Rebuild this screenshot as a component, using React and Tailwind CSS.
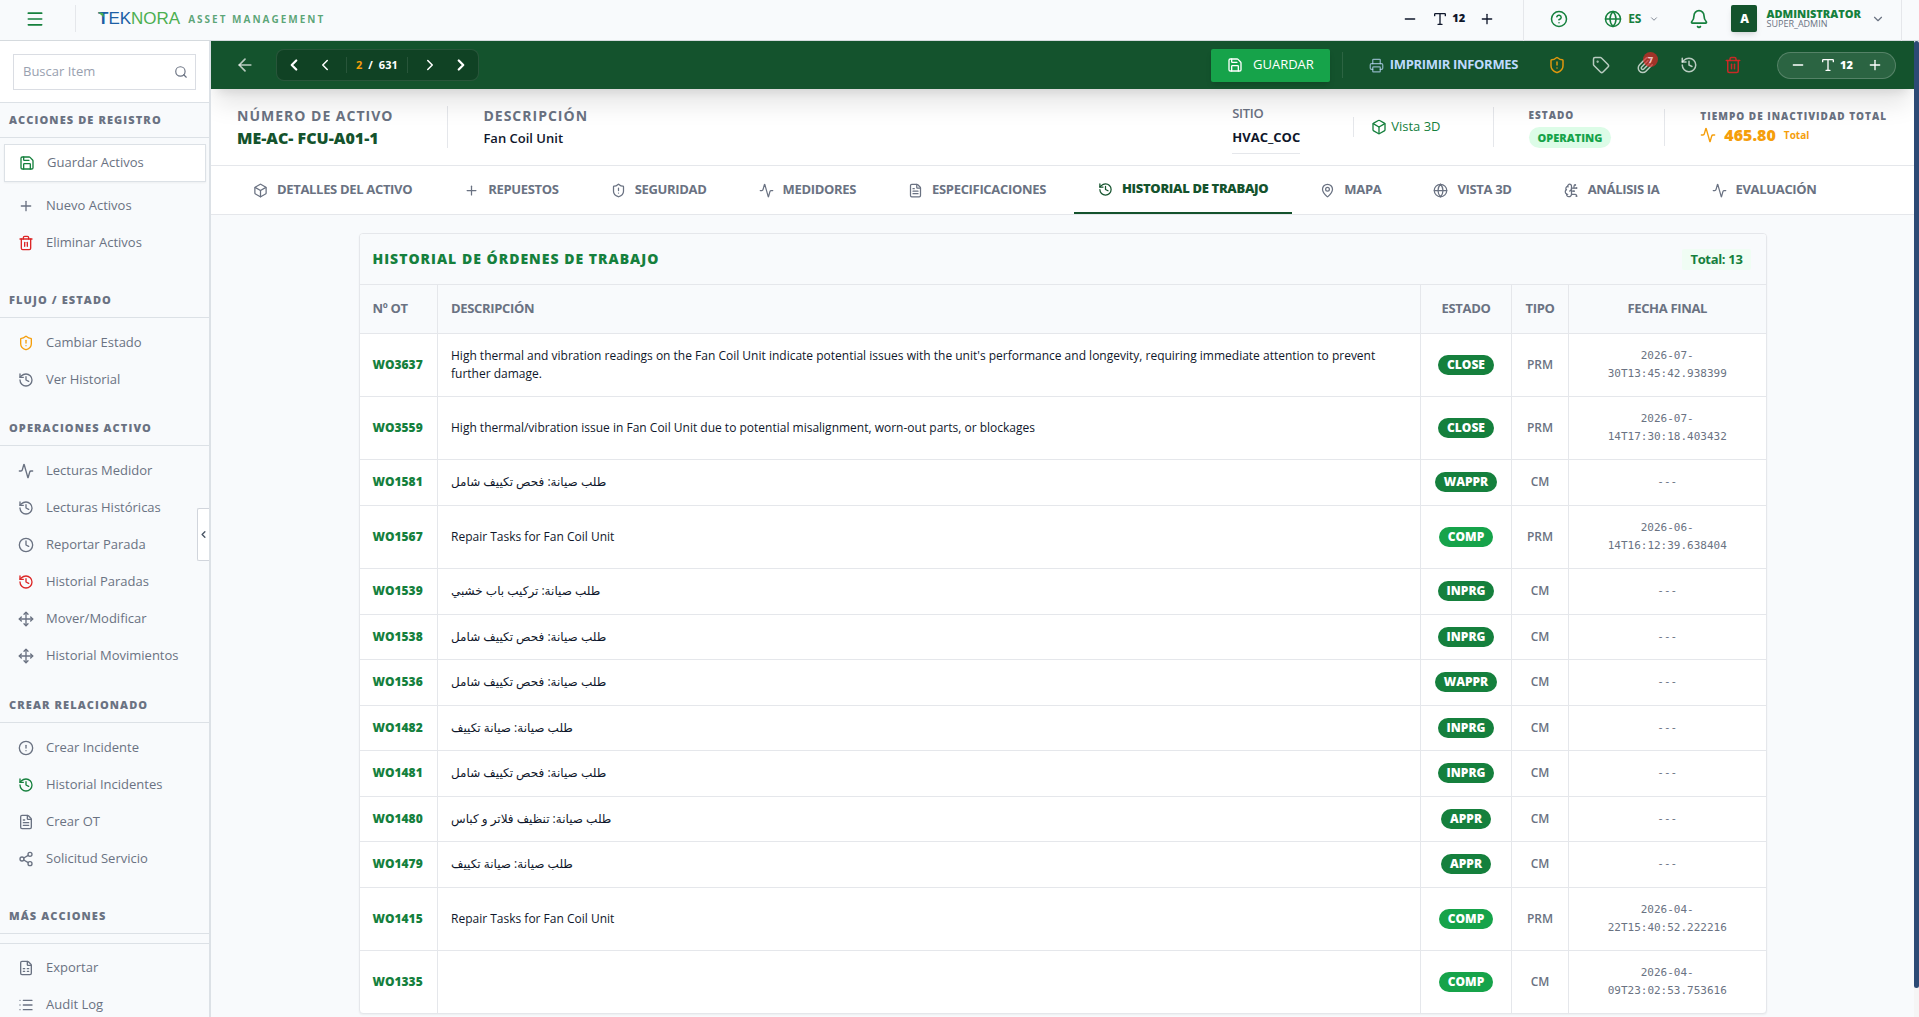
import { useState } from 'react';
import {
    Activity, ArrowLeft, Bell, Box, BrainCircuit, ChevronDown, ChevronLeft, ChevronRight,
    CircleAlert, CircleQuestionMark, Clock, FileSpreadsheet, FileText, Globe, History, List,
    MapPin, Menu, Minus, Move, Paperclip, Plus, Printer, Save, Search, Share2, ShieldAlert,
    Tag, Trash2, Type,
} from 'lucide-react';

const sections = [
    {
        title: 'ACCIONES DE REGISTRO',
        pad: 'pt-[6px] pb-[22px]',
        items: [
            { label: 'Guardar Activos', icon: Save, color: 'text-[#15803d]', active: true },
            { label: 'Nuevo Activos', icon: Plus },
            { label: 'Eliminar Activos', icon: Trash2, color: 'text-[#dc2626]' },
        ],
    },
    {
        title: 'FLUJO / ESTADO',
        pad: 'pt-[6px] pb-[13px]',
        items: [
            { label: 'Cambiar Estado', icon: ShieldAlert, color: 'text-[#f59e0b]' },
            { label: 'Ver Historial', icon: History },
        ],
    },
    {
        title: 'OPERACIONES ACTIVO',
        pad: 'pt-[6px] pb-[14px]',
        items: [
            { label: 'Lecturas Medidor', icon: Activity },
            { label: 'Lecturas Históricas', icon: History },
            { label: 'Reportar Parada', icon: Clock },
            { label: 'Historial Paradas', icon: History, color: 'text-[#dc2626]' },
            { label: 'Mover/Modificar', icon: Move },
            { label: 'Historial Movimientos', icon: Move },
        ],
    },
    {
        title: 'CREAR RELACIONADO',
        pad: 'pt-[6px] pb-[22px]',
        items: [
            { label: 'Crear Incidente', icon: CircleAlert },
            { label: 'Historial Incidentes', icon: History, color: 'text-[#15803d]' },
            { label: 'Crear OT', icon: FileText },
            { label: 'Solicitud Servicio', icon: Share2 },
        ],
    },
    {
        title: 'MÁS ACCIONES',
        pad: 'pt-[5px] pb-4',
        divided: true,
        items: [
            { label: 'Exportar', icon: FileSpreadsheet },
            { label: 'Audit Log', icon: List },
        ],
    },
];

const tabs = [
    { label: 'DETALLES DEL ACTIVO', icon: Box },
    { label: 'REPUESTOS', icon: Plus },
    { label: 'SEGURIDAD', icon: ShieldAlert },
    { label: 'MEDIDORES', icon: Activity },
    { label: 'ESPECIFICACIONES', icon: FileText },
    { label: 'HISTORIAL DE TRABAJO', icon: History },
    { label: 'MAPA', icon: MapPin },
    { label: 'VISTA 3D', icon: Globe },
    { label: 'ANÁLISIS IA', icon: BrainCircuit },
    { label: 'EVALUACIÓN', icon: Activity },
];

const orders = [
    { id: 'WO3637', text: "High thermal and vibration readings on the Fan Coil Unit indicate potential issues with the unit's performance and longevity, requiring immediate attention to prevent further damage.", status: 'CLOSE', type: 'PRM', date: '2026-07-30T13:45:42.938399' },
    { id: 'WO3559', text: 'High thermal/vibration issue in Fan Coil Unit due to potential misalignment, worn-out parts, or blockages', status: 'CLOSE', type: 'PRM', date: '2026-07-14T17:30:18.403432' },
    { id: 'WO1581', text: 'طلب صيانة: فحص تكييف شامل', status: 'WAPPR', type: 'CM' },
    { id: 'WO1567', text: 'Repair Tasks for Fan Coil Unit', status: 'COMP', type: 'PRM', date: '2026-06-14T16:12:39.638404' },
    { id: 'WO1539', text: 'طلب صيانة: تركيب باب خشبي', status: 'INPRG', type: 'CM' },
    { id: 'WO1538', text: 'طلب صيانة: فحص تكييف شامل', status: 'INPRG', type: 'CM' },
    { id: 'WO1536', text: 'طلب صيانة: فحص تكييف شامل', status: 'WAPPR', type: 'CM' },
    { id: 'WO1482', text: 'طلب صيانة: صيانة تكييف', status: 'INPRG', type: 'CM' },
    { id: 'WO1481', text: 'طلب صيانة: فحص تكييف شامل', status: 'INPRG', type: 'CM' },
    { id: 'WO1480', text: 'طلب صيانة: تنظيف فلاتر و كباس', status: 'APPR', type: 'CM' },
    { id: 'WO1479', text: 'طلب صيانة: صيانة تكييف', status: 'APPR', type: 'CM' },
    { id: 'WO1415', text: 'Repair Tasks for Fan Coil Unit', status: 'COMP', type: 'PRM', date: '2026-04-22T15:40:52.222216' },
    { id: 'WO1335', text: '', status: 'COMP', type: 'CM', date: '2026-04-09T23:02:53.753616' },
];

const Logo = () => (
    <a href="#" className="flex items-center gap-2">
        <span className="relative font-['Liberation_Sans',sans-serif] text-[17px] leading-5 text-[#4caf50]">
            <span className="font-bold text-[#1c5fa5]">T</span>
            <span className="text-[#1c5fa5]">EK</span>NORA
            <svg className="absolute left-0 top-[3px] size-[6px]" viewBox="0 0 6 6" aria-hidden="true">
                <path d="M0 0 L5 1 L6 5 L3 3 Z" fill="#4caf50" />
            </svg>
        </span>
        <span className="text-[10px] leading-5 font-bold tracking-[0.2em] text-[#15803d]/70">ASSET MANAGEMENT</span>
    </a>
);

const FontSizer = () => (
    <>
        <button aria-label="Reducir texto"><Minus size={16} /></button>
        <span className="flex items-center gap-1">
            <Type size={16} />
            <span className="text-[11px] font-extrabold">12</span>
        </span>
        <button aria-label="Aumentar texto"><Plus size={16} /></button>
    </>
);

const TopBar = () => (
    <header className="flex h-[41px] shrink-0 items-center border-b border-[#d5dade] bg-[#f8fafc] pb-[3px]">
        <button aria-label="Menú" className="ml-[25px] text-[#15803d]"><Menu size={20} /></button>
        <div className="ml-[30px] mr-[22px] h-[27px] w-px bg-gray-200" />
        <Logo />
        <div className="ml-auto flex items-center gap-[14px] pr-7 text-slate-900">
            <FontSizer />
        </div>
        <div className="-mb-[3px] flex h-[41px] items-center border-x border-gray-200 pb-[3px] pl-[26px] pr-4 text-[#15803d]">
            <button aria-label="Ayuda"><CircleQuestionMark size={18} /></button>
            <button className="ml-9 flex items-center gap-[6px] text-xs font-bold">
                <Globe size={18} />
                ES
                <ChevronDown size={10} className="ml-[2px] text-gray-500" />
            </button>
            <button aria-label="Notificaciones" className="ml-[30px]"><Bell size={20} /></button>
            <button className="ml-[22px] flex items-center text-left">
                <span className="flex h-[27px] w-[26px] items-center justify-center rounded-xs bg-[#14532d] text-xs font-extrabold text-white shadow-md">A</span>
                <span className="ml-[9px] flex flex-col">
                    <span className="text-[11px] leading-[10px] font-extrabold">ADMINISTRATOR</span>
                    <span className="text-[9px] leading-[9px] font-medium text-gray-500">SUPER_ADMIN</span>
                </span>
                <ChevronDown size={14} className="ml-[10px] text-gray-500" />
            </button>
        </div>
        <div className="w-[17px]" />
    </header>
);

const Sidebar = () => (
    <aside className="relative flex w-[211px] shrink-0 flex-col border-r-2 border-[#dce1e6] bg-[#f8fafc]">
        <div className="shrink-0 border-b border-[#dce1e6] bg-white px-[13px] pt-[13px] pb-3">
            <label className="flex h-[36px] items-center border border-gray-300/80 pl-[9px] pr-[7px]">
                <input type="text" placeholder="Buscar Item" aria-label="Buscar Item" className="min-w-0 flex-1 text-[13px] outline-none placeholder:text-gray-400" />
                <Search size={14} className="text-gray-500" />
            </label>
        </div>
        <nav className="min-h-0 flex-1 overflow-hidden">
            {sections.map((section) => (
                <section key={section.title}>
                    <h2 className="h-[35px] border-b border-[#dce1e6] pl-[9px] text-[11px] leading-[34px] font-extrabold tracking-widest text-gray-500">
                        {section.title}
                    </h2>
                    {section.divided && <hr className="mt-[9px] border-[#dce1e6]" />}
                    <ul className={section.pad}>
                        {section.items.map(({ label, icon: Icon, color = 'text-gray-500', active }) => (
                            <li key={label} className={active ? 'mb-[5px] pl-1 pr-[3px]' : ''}>
                                <a
                                    href="#"
                                    className={`flex items-center gap-3 text-[13px] font-medium text-gray-500 ${active ? 'h-[38px] border border-[#dce1e6] bg-white pl-[14px] shadow-xs' : 'h-[37px] pl-[18px]'}`}
                                >
                                    <Icon size={16} className={color} />
                                    {label}
                                </a>
                            </li>
                        ))}
                    </ul>
                </section>
            ))}
        </nav>
        <button aria-label="Contraer panel" className="absolute right-0 top-[467px] flex h-[53px] w-3 items-center justify-center rounded-l-xs border border-r-0 border-gray-300 bg-white text-gray-600">
            <ChevronLeft size={11} strokeWidth={3} />
        </button>
    </aside>
);

const Toolbar = () => (
    <div className="relative z-10 flex h-12 shrink-0 items-center bg-[#14532d] pl-6 pr-[18px] text-white shadow-xl">
        <button aria-label="Volver" className="text-white/70"><ArrowLeft size={20} /></button>
        <div className="ml-[21px] flex h-8 items-center rounded-lg border border-white/10 bg-black/20 px-2">
            <button aria-label="Primero"><ChevronLeft size={18} strokeWidth={3} /></button>
            <button aria-label="Anterior" className="ml-[13px]"><ChevronLeft size={18} /></button>
            <div className="ml-3 flex h-4 items-center border-x border-white/10 px-[9px] text-[11px] font-bold">
                <span className="text-[#f59e0b]">2</span>
                <span className="px-[6px]">/</span>
                <span>631</span>
            </div>
            <button aria-label="Siguiente" className="ml-[13px]"><ChevronRight size={18} /></button>
            <button aria-label="Último" className="ml-[13px]"><ChevronRight size={18} strokeWidth={3} /></button>
        </div>
        <button className="ml-auto flex h-[33px] items-center gap-[10px] rounded-xs bg-[#16a34a] px-4 text-[13px] shadow-md">
            <Save size={16} />
            GUARDAR
        </button>
        <div className="mx-3 h-[26px] w-px bg-white/10" />
        <button className="ml-[14px] flex items-center gap-[6px] text-[13px] font-bold tracking-tight text-[#bfdbfe]">
            <Printer size={15} className="text-[#bfdbfe]/70" />
            IMPRIMIR INFORMES
        </button>
        <div className="ml-[30px] flex items-center gap-[26px] text-white/70">
            <button aria-label="Estado" className="text-[#f59e0b]/90"><ShieldAlert size={18} /></button>
            <button aria-label="Etiqueta"><Tag size={18} /></button>
            <button aria-label="Adjuntos" className="relative">
                <Paperclip size={18} />
                <span className="absolute -right-1 -top-1 flex size-[15px] items-center justify-center rounded-full bg-[#dc2626]/70 text-[9px] font-bold">7</span>
            </button>
            <button aria-label="Historial"><History size={18} /></button>
            <button aria-label="Eliminar" className="text-[#dc2626]/90"><Trash2 size={18} /></button>
        </div>
        <div className="ml-[35px] flex h-[27px] items-center gap-[14px] rounded-full border border-white/20 bg-white/10 px-3">
            <FontSizer />
        </div>
    </div>
);

const InfoBar = () => (
    <div className="flex h-[77px] shrink-0 items-center border-b border-gray-200 bg-white pl-[26px] pr-[27px] shadow-sm">
        <div>
            <div className="text-sm leading-[22px] font-bold tracking-[1px] text-gray-500">NÚMERO DE ACTIVO</div>
            <div className="text-base leading-[22px] font-extrabold text-[#14532d]">ME-AC- FCU-A01-1</div>
        </div>
        <div className="ml-[54px] mr-[35px] h-[42px] w-px bg-gray-200" />
        <div>
            <div className="text-sm leading-[22px] font-bold tracking-[1px] text-gray-500">DESCRIPCIÓN</div>
            <div className="text-[13px] leading-[22px] font-semibold text-slate-900">Fan Coil Unit</div>
        </div>
        <div className="ml-auto">
            <div className="text-[13px] leading-6 font-semibold tracking-tight text-gray-500">SITIO</div>
            <div className="border-b border-gray-200 pb-1 text-[13px] leading-6 font-bold text-slate-900">HVAC_COC</div>
        </div>
        <div className="ml-[53px] mr-[17px] h-5 w-px bg-gray-200" />
        <button className="flex items-center gap-1 text-[13px] text-[#15803d]">
            <Box size={16} />
            Vista 3D
        </button>
        <div className="ml-[52px] mr-[35px] h-10 w-px bg-gray-200" />
        <div className="flex flex-col items-start gap-1">
            <div className="text-[10px] leading-4 font-extrabold tracking-widest text-gray-500">ESTADO</div>
            <span className="rounded-full bg-[#dcfce7] px-[9px] text-[11px] leading-[21px] font-extrabold text-[#16a34a]">OPERATING</span>
        </div>
        <div className="ml-[53px] mr-[35px] h-[37px] w-px bg-gray-200" />
        <div>
            <div className="text-[10px] leading-4 font-extrabold tracking-widest text-gray-500">TIEMPO DE INACTIVIDAD TOTAL</div>
            <div className="flex items-center gap-2 leading-[22px] text-[#f59e0b]">
                <Activity size={16} />
                <span className="text-base leading-[22px] font-extrabold">465.80</span>
                <span className="text-[10px] font-bold">Total</span>
            </div>
        </div>
    </div>
);

const OrdersCard = () => (
    <section className="mx-auto w-full max-w-[1408px] overflow-hidden rounded-sm border border-gray-200 bg-white shadow-xs">
        <div className="flex h-[51px] items-center justify-between border-b border-gray-200 bg-[#f8fafc] pl-[13px] pr-[15px]">
            <h1 className="text-sm font-extrabold tracking-[1px] text-[#15803d]">HISTORIAL DE ÓRDENES DE TRABAJO</h1>
            <span className="rounded-xs bg-[#f0fdf4] px-2 text-[13px] leading-[21px] font-bold tracking-tight text-[#15803d]">Total: 13</span>
        </div>
        <table className="w-full table-fixed border-collapse">
            <colgroup>
                <col className="w-[78px]" />
                <col />
                <col className="w-[91px]" />
                <col className="w-[57px]" />
                <col className="w-[197px]" />
            </colgroup>
            <thead>
                <tr className="h-12 border-b border-gray-200 bg-[#f8fafc] text-[13px] text-gray-500 [&>th]:font-bold [&>th]:tracking-tight [&>th+th]:border-l [&>th+th]:border-gray-200">
                    <th className="pl-[13px] text-left">Nº OT</th>
                    <th className="pl-[13px] text-left">DESCRIPCIÓN</th>
                    <th>ESTADO</th>
                    <th>TIPO</th>
                    <th>FECHA FINAL</th>
                </tr>
            </thead>
            <tbody>
                {orders.map((order) => (
                    <tr key={order.id} className="border-gray-200 text-xs leading-[18px] not-last:border-b odd:h-[46px] [&>td+td]:border-l [&>td+td]:border-gray-200">
                        <td className="pl-[13px] font-extrabold text-[#15803d]">{order.id}</td>
                        <td className="py-[13px] pl-[13px] pr-1 text-slate-900">{order.text}</td>
                        <td className="text-center">
                            <span className={`inline-block rounded-full px-[9px] text-xs leading-5 font-extrabold text-white ${order.status === 'COMP' ? 'bg-[#16a34a]' : 'bg-[#15803d]'}`}>
                                {order.status}
                            </span>
                        </td>
                        <td className="text-center font-semibold text-gray-500">{order.type}</td>
                        <td className="px-[14px] py-[13px] text-center font-['DejaVu_Sans_Mono',monospace] text-[11px] leading-[18px] text-gray-500">{order.date || '---'}</td>
                    </tr>
                ))}
            </tbody>
        </table>
    </section>
);

const App = () => {
    const [tab, setTab] = useState('HISTORIAL DE TRABAJO');

    return (
        <div className="flex h-screen flex-col overflow-hidden bg-[#f8fafc] font-['Open_Sans','Noto_Sans','DejaVu_Sans',sans-serif]">
            <TopBar />
            <div className="flex min-h-0 flex-1">
                <Sidebar />
                <main className="flex min-w-0 flex-1 flex-col overflow-hidden">
                    <Toolbar />
                    <InfoBar />
                    <div className="flex h-[49px] shrink-0 gap-1 border-b border-gray-200 bg-white pl-[18px]">
                        {tabs.map(({ label, icon: Icon }) => (
                            <button
                                key={label}
                                onClick={() => setTab(label)}
                                className={`flex items-center gap-[9px] px-6 text-[13px] tracking-tight whitespace-nowrap ${tab === label ? 'border-b-2 border-[#14532d] font-extrabold text-[#14532d]' : 'font-bold text-gray-500'}`}
                            >
                                <Icon size={15} />
                                {label}
                            </button>
                        ))}
                    </div>
                    <div className="min-h-0 flex-1 overflow-hidden px-4 pt-[18px]">
                        <OrdersCard />
                    </div>
                </main>
                {/* scroll track */}
                <div className="w-[5px] shrink-0 bg-neutral-100">
                    <div className="h-[97%] rounded-sm bg-[#2c4a75]" />
                </div>
            </div>
        </div>
    );
};

export default App;
